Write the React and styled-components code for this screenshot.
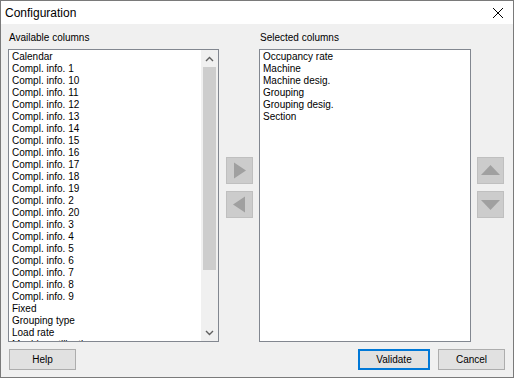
import React from "react";
import styled, { createGlobalStyle } from "styled-components";

const Global = createGlobalStyle`
  html, body { margin: 0; padding: 0; background: #ffffff; }
  body { font-family: "Liberation Sans", Arial, sans-serif; }
  * { box-sizing: border-box; }
`;

const Window = styled.div`
  width: 514px;
  height: 378px;
  border: 1px solid #7a7a7a;
  display: flex;
  flex-direction: column;
  background: #f0f0f0;
  font-size: 10px;
  color: #000;
`;

const TitleBar = styled.div`
  height: 23px;
  background: #ffffff;
  display: flex;
  align-items: center;
  justify-content: space-between;
  padding: 0 8px 0 4px;
  font-size: 12px;
`;

const CloseBtn = styled.div`
  width: 14px;
  height: 14px;
  display: flex;
  align-items: center;
  justify-content: center;
`;

const Body = styled.div`
  flex: 1;
  display: flex;
  flex-direction: column;
  padding: 7px 8px 0 7px;
`;

const Columns = styled.div`
  display: flex;
  gap: 6px;
`;

const Panel = styled.div`
  width: ${(p) => p.$w}px;
  display: flex;
  flex-direction: column;
`;

const Label = styled.div`
  height: 18px;
  line-height: 13px;
  padding-left: 1px;
  font-size: 10px;
`;

const ListBox = styled.div`
  height: 293px;
  border: 1px solid #828790;
  background: #fff;
  display: flex;
  overflow: hidden;
`;

const Items = styled.div`
  flex: 1;
  padding: 1px 0 0 3px;
  overflow: hidden;
`;

const Item = styled.div`
  height: 12px;
  line-height: 12px;
  font-size: 10px;
  white-space: nowrap;
`;

const ScrollBar = styled.div`
  width: 17px;
  background: #f0f0f0;
  display: flex;
  flex-direction: column;
  align-items: center;
`;

const ScrollArrow = styled.div`
  height: 17px;
  width: 17px;
  display: flex;
  align-items: center;
  justify-content: center;
`;

const Thumb = styled.div`
  width: 13px;
  height: 203px;
  background: #cdcdcd;
`;

const Spacer = styled.div`
  flex: 1;
`;

const ArrowColumn = styled.div`
  display: flex;
  flex-direction: column;
  gap: 7px;
  padding-top: 126px;
  margin-left: ${(p) => p.$ml || 0}px;
`;

const ArrowBtn = styled.div`
  width: 27px;
  height: 27px;
  background: #cccccc;
  border: 1px solid #bfbfbf;
  display: flex;
  align-items: center;
  justify-content: center;
`;

const Footer = styled.div`
  display: flex;
  align-items: center;
  margin-top: 7px;
  padding-left: 1px;
`;

const Button = styled.div`
  width: ${(p) => p.$w}px;
  height: 21px;
  background: #e1e1e1;
  border: ${(p) => (p.$primary ? "2px solid #0078d7" : "1px solid #adadad")};
  display: flex;
  align-items: center;
  justify-content: center;
  font-size: 10px;
  margin-left: ${(p) => p.$ml || 0}px;
`;

const Chevron = ({ up }) => (
  <svg width="9" height="6" viewBox="0 0 9 6">
    <path
      d={up ? "M1 5 L4.5 1.5 L8 5" : "M1 1 L4.5 4.5 L8 1"}
      fill="none"
      stroke="#606060"
      strokeWidth="1.4"
    />
  </svg>
);

const Tri = ({ dir }) => {
  const pts = {
    right: "5,2.5 17,10.5 5,18.5",
    left: "16,2.5 4,10.5 16,18.5",
    up: "1,15 10.5,5 20,15",
    down: "1,6 10.5,16 20,6",
  }[dir];
  return (
    <svg width="21" height="21" viewBox="0 0 21 21">
      <polygon points={pts} fill="#a0a0a0" />
    </svg>
  );
};

const available = [
  "Calendar",
  "Compl. info. 1",
  "Compl. info. 10",
  "Compl. info. 11",
  "Compl. info. 12",
  "Compl. info. 13",
  "Compl. info. 14",
  "Compl. info. 15",
  "Compl. info. 16",
  "Compl. info. 17",
  "Compl. info. 18",
  "Compl. info. 19",
  "Compl. info. 2",
  "Compl. info. 20",
  "Compl. info. 3",
  "Compl. info. 4",
  "Compl. info. 5",
  "Compl. info. 6",
  "Compl. info. 7",
  "Compl. info. 8",
  "Compl. info. 9",
  "Fixed",
  "Grouping type",
  "Load rate",
  "Machine utilization",
];

const selected = [
  "Occupancy rate",
  "Machine",
  "Machine desig.",
  "Grouping",
  "Grouping desig.",
  "Section",
];

export default function App() {
  return (
    <>
      <Global />
      <Window>
        <TitleBar>
          <span>Configuration</span>
          <CloseBtn>
            <svg width="12" height="12" viewBox="0 0 12 12">
              <path d="M1 1 L11 11 M11 1 L1 11" stroke="#000" strokeWidth="1" />
            </svg>
          </CloseBtn>
        </TitleBar>
        <Body>
          <Columns>
            <Panel $w={211}>
              <Label>Available columns</Label>
              <ListBox>
                <Items>
                  {available.map((t) => (
                    <Item key={t}>{t}</Item>
                  ))}
                </Items>
                <ScrollBar>
                  <ScrollArrow>
                    <Chevron up />
                  </ScrollArrow>
                  <Thumb />
                  <Spacer />
                  <ScrollArrow>
                    <Chevron />
                  </ScrollArrow>
                </ScrollBar>
              </ListBox>
            </Panel>
            <ArrowColumn $ml={1}>
              <ArrowBtn>
                <Tri dir="right" />
              </ArrowBtn>
              <ArrowBtn>
                <Tri dir="left" />
              </ArrowBtn>
            </ArrowColumn>
            <Panel $w={212}>
              <Label>Selected columns</Label>
              <ListBox>
                <Items>
                  {selected.map((t) => (
                    <Item key={t}>{t}</Item>
                  ))}
                </Items>
              </ListBox>
            </Panel>
            <ArrowColumn>
              <ArrowBtn>
                <Tri dir="up" />
              </ArrowBtn>
              <ArrowBtn>
                <Tri dir="down" />
              </ArrowBtn>
            </ArrowColumn>
          </Columns>
          <Footer>
            <Button $w={67}>Help</Button>
            <Spacer />
            <Button $w={72} $primary>Validate</Button>
            <Button $w={67} $ml={8}>Cancel</Button>
          </Footer>
        </Body>
      </Window>
    </>
  );
}
